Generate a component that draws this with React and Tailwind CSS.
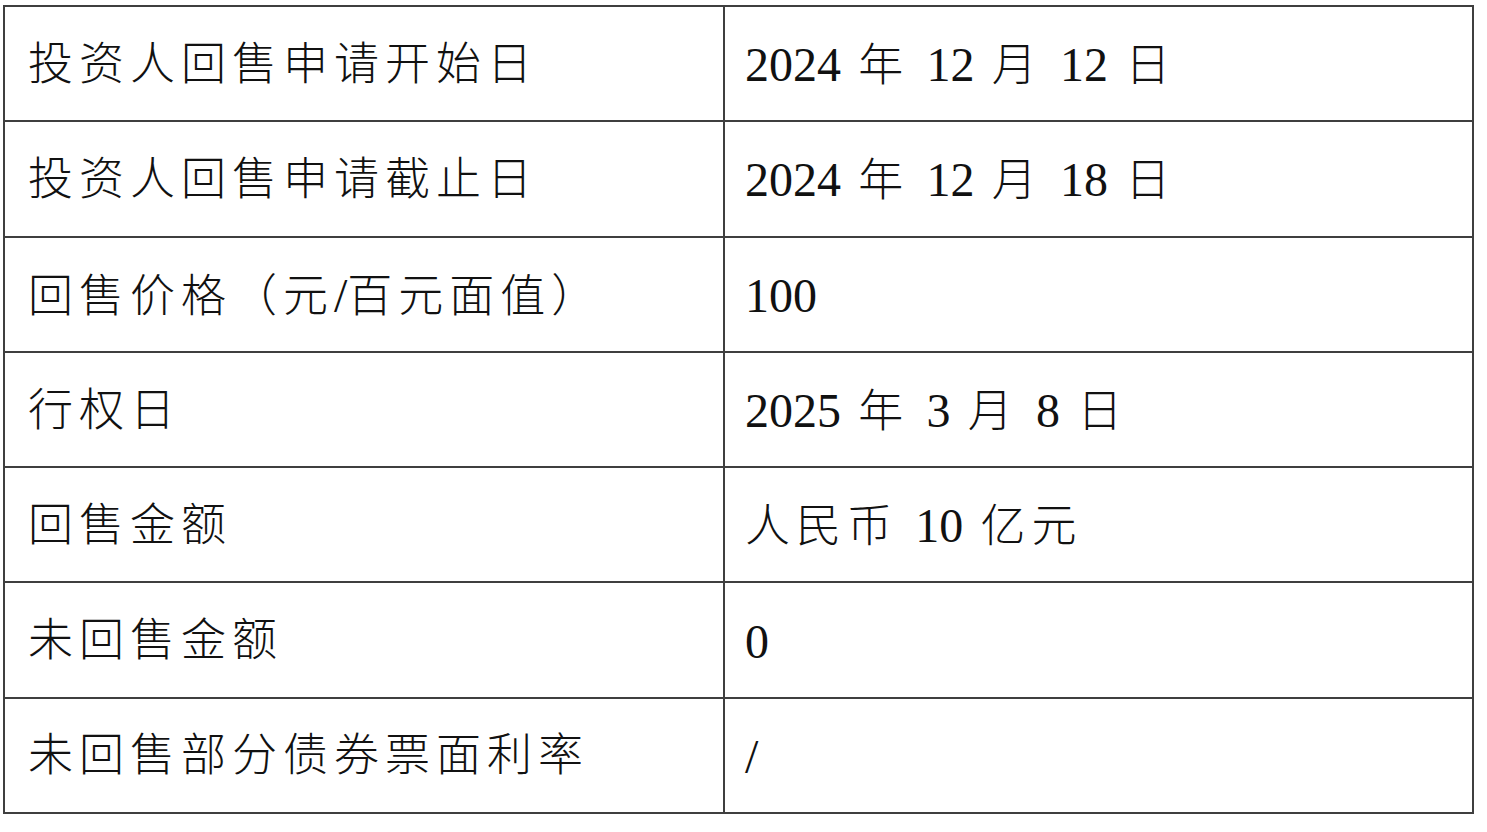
const rows = [
    ['投资人回售申请开始日', '2024 年 12 月 12 日'],
    ['投资人回售申请截止日', '2024 年 12 月 18 日'],
    ['回售价格（元/百元面值）', '100'],
    ['行权日', '2025 年 3 月 8 日'],
    ['回售金额', '人民币 10 亿元'],
    ['未回售金额', '0'],
    ['未回售部分债券票面利率', '/'],
];

// split into runs so digits keep their natural width and CJK gets the wide spacing
function Runs({ text }) {
    const parts = text.match(/[0-9/]+|[^0-9/]+/g) || [];
    return parts.map((p, i) =>
        /^[0-9/]+$/.test(p) ? (
            <span key={i} className="text-[48px]">{p}</span>
        ) : (
            <span key={i} className="text-[45px] font-light tracking-[6px]">{p}</span>
        )
    );
}

export default function App() {
    return (
        <div className="min-h-[832px] w-full bg-white pt-[5px] pl-[3px]">
            <table
                className="border-collapse text-[#111]"
                style={{ fontFamily: '"Liberation Serif", "Noto Sans CJK SC", serif' }}
            >
                <tbody>
                    {rows.map(([k, v], i) => (
                        <tr key={i} className="h-[115.3px]">
                            <td className="w-[720px] border-2 border-[#3f3f3f] pl-[23px] pt-[3px] align-middle leading-none whitespace-nowrap">
                                <Runs text={k} />
                            </td>
                            <td className="w-[749px] border-2 border-[#3f3f3f] pl-[20px] pt-[3px] align-middle leading-none whitespace-nowrap">
                                <Runs text={v} />
                            </td>
                        </tr>
                    ))}
                </tbody>
            </table>
        </div>
    );
}
